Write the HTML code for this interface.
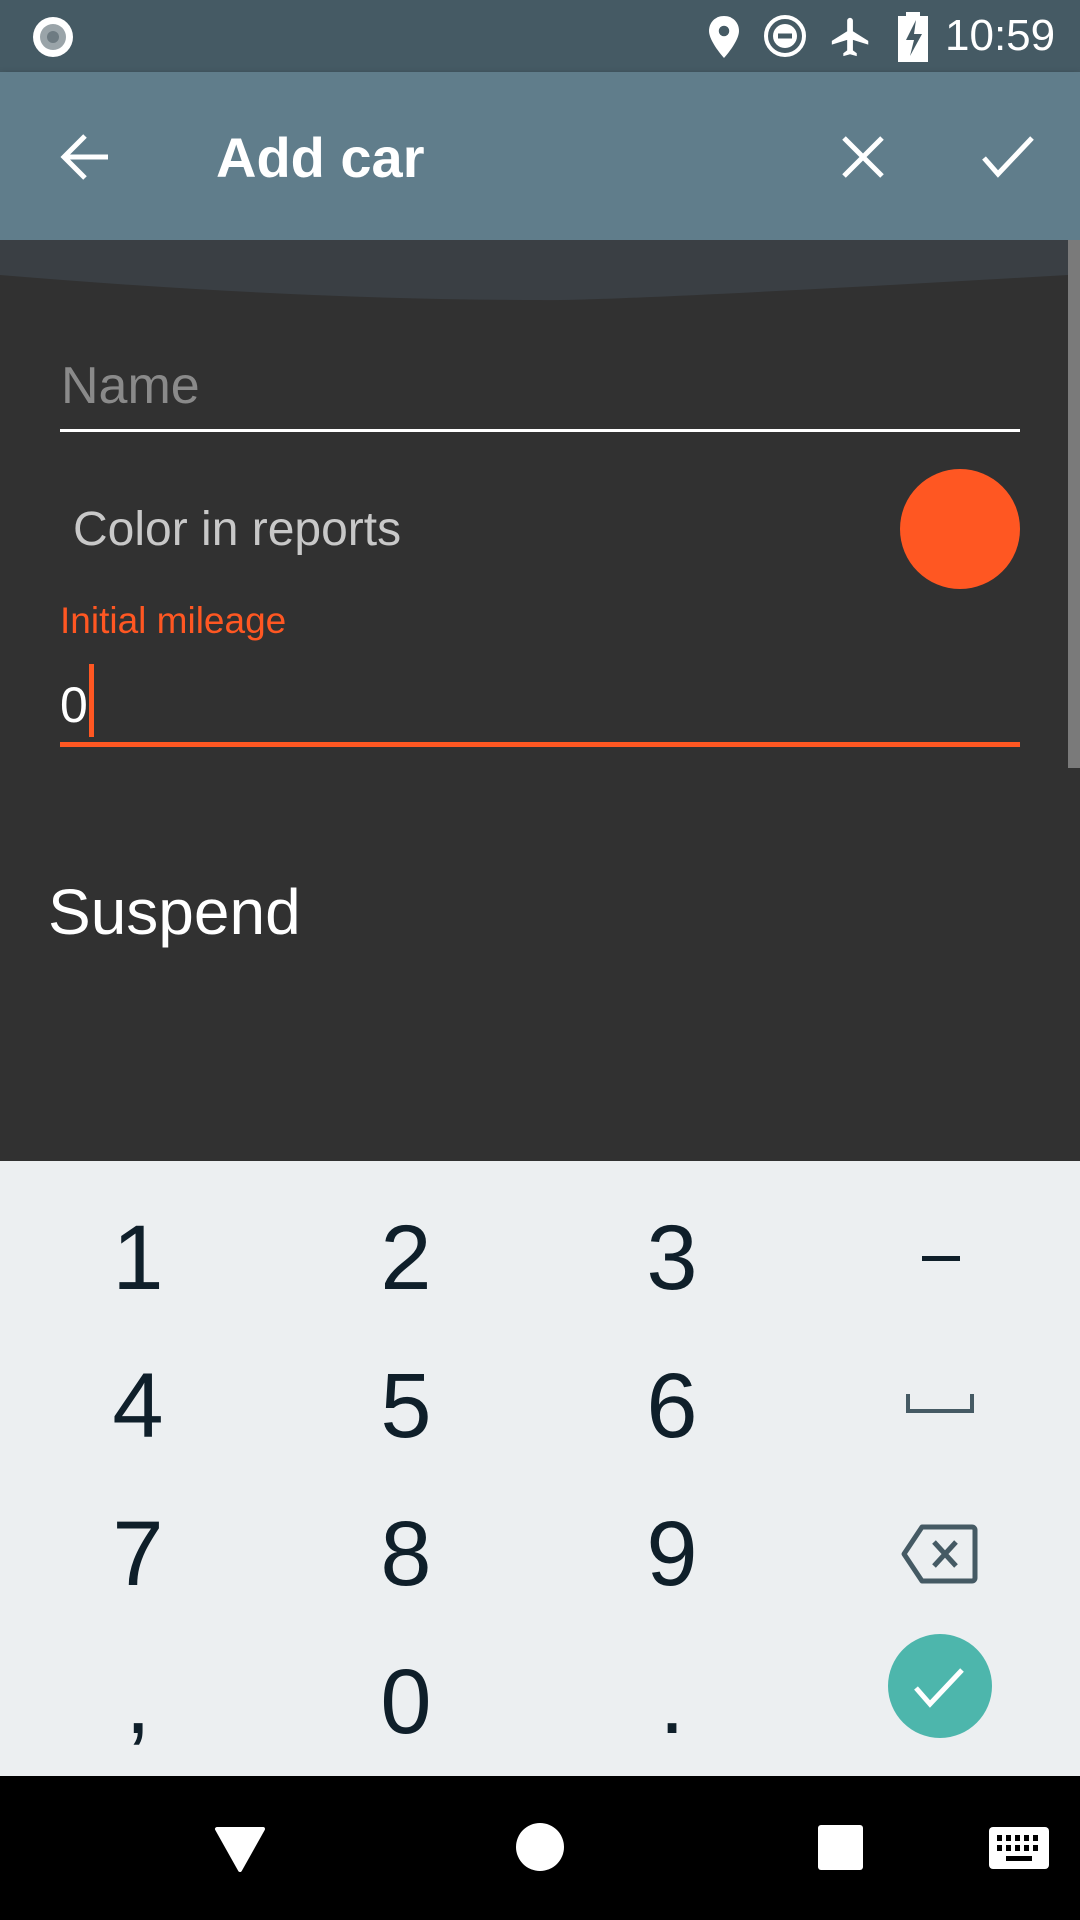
<!DOCTYPE html>
<html><head><meta charset="utf-8"><style>
*{margin:0;padding:0;box-sizing:border-box}
body{width:1080px;height:1920px;position:relative;overflow:hidden;background:#313131;font-family:"Liberation Sans",Roboto,sans-serif}
.abs{position:absolute}
.k{position:absolute;width:200px;margin-left:-100px;text-align:center;font-size:92px;color:#0f1f2a;line-height:1}
</style></head><body>
<div class="abs" style="left:0;top:0;width:1080px;height:72px;background:#455a64"></div>
<svg class="abs" style="left:30px;top:14px" width="46" height="46" viewBox="0 0 46 46"><circle cx="23" cy="23" r="20" fill="#fff"/><circle cx="23" cy="23" r="13" fill="#9aa4a9"/><circle cx="23" cy="23" r="6" fill="#6e7b82"/></svg>
<svg class="abs" style="left:706px;top:14px" width="36" height="46" viewBox="0 0 24 30"><path d="M12 1C6 1 2 5.5 2 11c0 7 10 18 10 18s10-11 10-18C22 5.5 18 1 12 1z" fill="#fff"/><circle cx="12" cy="11" r="3.5" fill="#455a64"/></svg>
<svg class="abs" style="left:763px;top:14px" width="44" height="44" viewBox="0 0 44 44"><circle cx="22" cy="22" r="19" fill="none" stroke="#fff" stroke-width="4"/><circle cx="22" cy="22" r="12" fill="#fff"/><rect x="15" y="19.5" width="14" height="5" fill="#455a64"/></svg>
<svg class="abs" style="left:827px;top:14px" width="48" height="46" viewBox="0 0 24 24"><path d="M21 16v-2l-8-5V3.5c0-.83-.67-1.5-1.5-1.5S10 2.67 10 3.5V9l-8 5v2l8-2.5V19l-2 1.5V22l3.5-1 3.5 1v-1.5L13 19v-5.5l8 2.5z" fill="#fff"/></svg>
<svg class="abs" style="left:898px;top:12px" width="30" height="50" viewBox="0 0 15 25"><path d="M4 0h7v2h4v23H0V2h4z" fill="#fff"/><path d="M9 4L4 14h4l-2 8 6-11H8z" fill="#455a64"/></svg>
<div class="abs" style="left:945px;top:12px;font-size:44px;color:#fff;line-height:48px">10:59</div>
<div class="abs" style="left:0;top:72px;width:1080px;height:168px;background:#607d8b;box-shadow:0 4px 8px rgba(0,0,0,.4)"></div>
<svg class="abs" style="left:58px;top:132px" width="54" height="50" viewBox="0 0 54 50"><path d="M50 25H6M27 4L6 25l21 21" fill="none" stroke="#fff" stroke-width="5"/></svg>
<div class="abs" style="left:216px;top:125px;font-size:56px;font-weight:bold;color:#fff;line-height:66px">Add car</div>
<svg class="abs" style="left:840px;top:134px" width="46" height="46" viewBox="0 0 46 46"><path d="M4 4l38 38M42 4L4 42" stroke="#fff" stroke-width="5"/></svg>
<svg class="abs" style="left:980px;top:134px" width="56" height="46" viewBox="0 0 56 46"><path d="M4 24l14 16L52 4" fill="none" stroke="#fff" stroke-width="5"/></svg>
<svg class="abs" style="left:0;top:240px" width="1068" height="62" viewBox="0 0 1068 62"><path d="M0 0H1068V35Q600 62 540 60Q300 60 0 35z" fill="#3a3f44"/></svg>
<div class="abs" style="left:1068px;top:240px;width:12px;height:528px;background:#7a7a7a"></div>
<div class="abs" style="left:61px;top:356px;font-size:52px;color:#8a8a8a;line-height:60px">Name</div>
<div class="abs" style="left:60px;top:429px;width:960px;height:3px;background:#fff"></div>
<div class="abs" style="left:73px;top:501px;font-size:48px;color:#c8c8c8;line-height:58px">Color in reports</div>
<div class="abs" style="left:900px;top:469px;width:120px;height:120px;border-radius:50%;background:#ff5722"></div>
<div class="abs" style="left:60px;top:599px;font-size:37px;color:#ff5722;line-height:44px">Initial mileage</div>
<div class="abs" style="left:60px;top:676px;font-size:50px;color:#fff;line-height:58px">0</div>
<div class="abs" style="left:89px;top:664px;width:5px;height:73px;background:#ff5722"></div>
<div class="abs" style="left:60px;top:742px;width:960px;height:5px;background:#ff5722"></div>
<div class="abs" style="left:48px;top:875px;font-size:64px;color:#fff;line-height:74px">Suspend</div>
<div class="abs" style="left:0;top:1161px;width:1080px;height:615px;background:#eceff1"></div>
<div class="k" style="left:138px;top:1212px">1</div><div class="k" style="left:406px;top:1212px">2</div><div class="k" style="left:672px;top:1212px">3</div>
<div class="abs" style="left:922px;top:1256px;width:38px;height:5px;background:#0f1f2a"></div>
<div class="k" style="left:138px;top:1360px">4</div><div class="k" style="left:406px;top:1360px">5</div><div class="k" style="left:672px;top:1360px">6</div>
<svg class="abs" style="left:906px;top:1392px" width="68" height="22" viewBox="0 0 68 22"><path d="M2 2v17h64V2" fill="none" stroke="#455a64" stroke-width="4"/></svg>
<div class="k" style="left:138px;top:1508px">7</div><div class="k" style="left:406px;top:1508px">8</div><div class="k" style="left:672px;top:1508px">9</div>
<svg class="abs" style="left:900px;top:1524px" width="78" height="60" viewBox="0 0 78 60"><path d="M22 3h50a3 3 0 0 1 3 3v48a3 3 0 0 1-3 3H22L4 30z" fill="none" stroke="#455a64" stroke-width="5" stroke-linejoin="round"/><path d="M34 18l22 24M56 18L34 42" stroke="#455a64" stroke-width="5"/></svg>
<div class="k" style="left:138px;top:1656px">,</div><div class="k" style="left:406px;top:1656px">0</div><div class="k" style="left:672px;top:1656px">.</div>
<div class="abs" style="left:888px;top:1634px;width:104px;height:104px;border-radius:50%;background:#4db6ac"></div>
<svg class="abs" style="left:912px;top:1666px" width="56" height="44" viewBox="0 0 56 44"><path d="M4 22l14 16L50 4" fill="none" stroke="#fff" stroke-width="5"/></svg>
<div class="abs" style="left:0;top:1776px;width:1080px;height:144px;background:#000"></div>
<svg class="abs" style="left:214px;top:1826px" width="52" height="46" viewBox="0 0 52 46"><path d="M3 3h46L26 44z" fill="#fff" stroke="#fff" stroke-linejoin="round" stroke-width="4"/></svg>
<div class="abs" style="left:516px;top:1823px;width:48px;height:48px;border-radius:50%;background:#fff"></div>
<div class="abs" style="left:818px;top:1825px;width:45px;height:45px;border-radius:3px;background:#fff"></div>
<svg class="abs" style="left:989px;top:1827px" width="60" height="42" viewBox="0 0 60 42"><rect width="60" height="42" rx="4" fill="#fff"/><g fill="#000"><rect x="8" y="8" width="5" height="6"/><rect x="17" y="8" width="5" height="6"/><rect x="26" y="8" width="5" height="6"/><rect x="35" y="8" width="5" height="6"/><rect x="44" y="8" width="5" height="6"/><rect x="8" y="18" width="5" height="6"/><rect x="17" y="18" width="5" height="6"/><rect x="26" y="18" width="5" height="6"/><rect x="35" y="18" width="5" height="6"/><rect x="44" y="18" width="5" height="6"/><rect x="17" y="29" width="26" height="5"/></g></svg>
</body></html>
